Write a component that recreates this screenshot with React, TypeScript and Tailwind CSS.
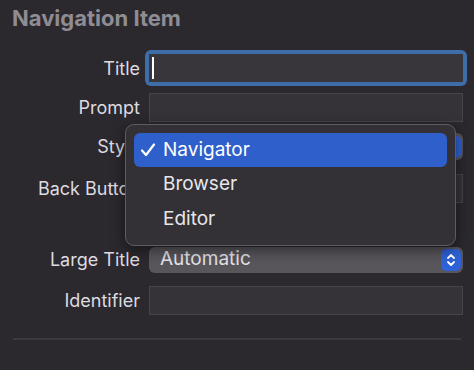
import React from "react";

const font = { fontFamily: "Inter, 'Noto Sans', sans-serif" };

function Arrows() {
  return (
    <div className="flex h-[22px] w-[20px] items-center justify-center rounded-[5px] bg-[#2f62d6]">
      <svg width="10" height="14" viewBox="0 0 10 14" fill="none" stroke="#fff" strokeWidth="1.8" strokeLinecap="round" strokeLinejoin="round">
        <path d="M2 5 L5 2 L8 5" />
        <path d="M2 9 L5 12 L8 9" />
      </svg>
    </div>
  );
}

function Row({ label, children, className = "" }: { label: string; children: React.ReactNode; className?: string }) {
  return (
    <div className={`flex items-center ${className}`}>
      <div className="w-[140px] shrink-0 whitespace-nowrap text-right text-[18px] text-[#dddbe0]">{label}</div>
      <div className="ml-[9px] w-[314px]">{children}</div>
    </div>
  );
}

function Field({ focused }: { focused?: boolean }) {
  if (focused) {
    return (
      <div className="-m-[4px] rounded-[6px] bg-[#3d6ea9] p-[4px]">
        <div className="flex h-[28px] items-center bg-[#38363b] pl-[3px]">
          <div className="h-[22px] w-[2px] bg-white" />
        </div>
      </div>
    );
  }
  return <div className="h-[29px] border border-[#46444a] bg-[#353338]" />;
}

export default function App() {
  return (
    <div className="relative h-[370px] w-[474px] overflow-hidden bg-[#2b292e]" style={font}>
      <div className="px-[12px] pt-[4px] text-[22px] font-bold leading-[28px] text-[#8f8d93]">Navigation Item</div>

      <div className="mt-[22px] flex flex-col">
        <Row label="Title">
          <Field focused />
        </Row>
        <Row label="Prompt" className="mt-[11px]">
          <Field />
        </Row>
        <Row label="Style" className="mt-[11px]">
          <div className="flex h-[27px] items-center justify-end rounded-[6px] bg-[#58565b] pr-[2px]">
            <Arrows />
          </div>
        </Row>
        <Row label="Back Button" className="mt-[14px]">
          <Field />
        </Row>
        <Row label="Large Title" className="mt-[43px]">
          <div className="flex h-[26px] items-center justify-between rounded-[6px] bg-[#58565b] pl-[11px] pr-[2px] text-[19px] text-[#e4e2e7]">
            <span>Automatic</span>
            <Arrows />
          </div>
        </Row>
        <Row label="Identifier" className="mt-[13px]">
          <Field />
        </Row>
      </div>

      <div className="mx-[13px] mt-[23px] h-[2px] bg-[#3c3a3f]" />

      {/* popup menu */}
      <div className="absolute left-[125px] top-[124px] w-[331px] rounded-[9px] border border-[#5e5c62] bg-[#333136] p-[8px] shadow-[0_4px_14px_rgba(0,0,0,0.5)]">
        <div className="flex h-[34px] items-center rounded-[6px] bg-[#2f5fcb] pl-[6px] text-[19px] text-white">
          <svg className="mr-[7px]" width="16" height="16" viewBox="0 0 16 16" fill="none" stroke="#fff" strokeWidth="2.2" strokeLinecap="round" strokeLinejoin="round">
            <path d="M2 8.5 L6 13 L14 2.5" />
          </svg>
          <span>Navigator</span>
        </div>
        <div className="flex h-[35px] items-center pl-[29px] text-[19px] text-[#e8e6eb]">Browser</div>
        <div className="flex h-[35px] items-center pl-[29px] text-[19px] text-[#e8e6eb]">Editor</div>
      </div>
    </div>
  );
}
